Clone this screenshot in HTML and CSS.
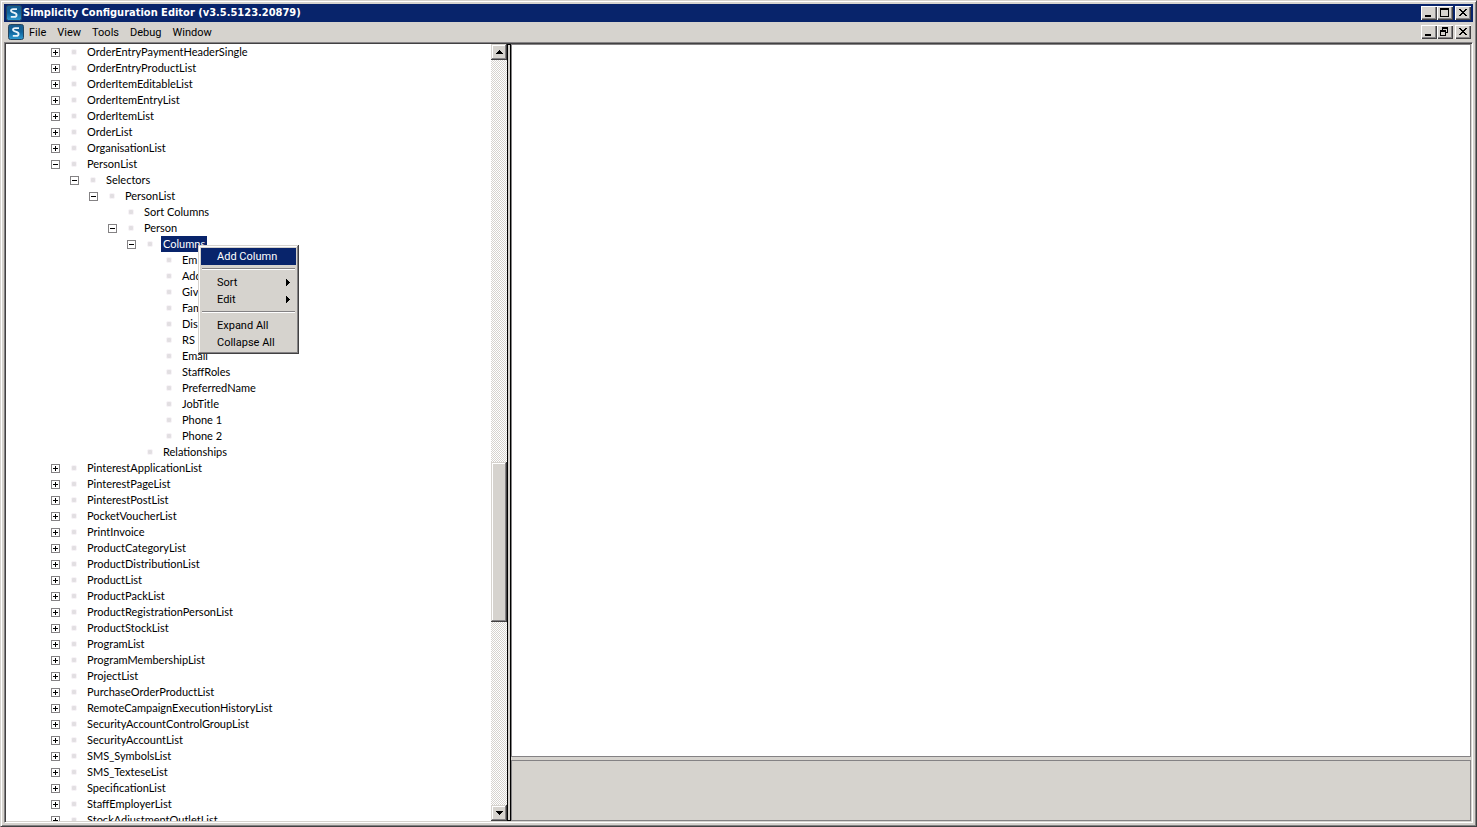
FILE: index.html
```html
<!DOCTYPE html>
<html lang="en">
<head>
    <meta charset="UTF-8">
    <meta name="viewport" content="width=device-width, initial-scale=1.0">
    <title>Simplicity Configuration Editor</title>
    <link rel="stylesheet" href="styles.css">
</head>
<body>
    <!-- shared logo -->
    <svg class="defs" width="0" height="0" aria-hidden="true">
        <defs>
            <linearGradient id="logoFill" x1="0" y1="0" x2="0" y2="1">
                <stop offset="0" stop-color="#175a8c"/>
                <stop offset="0.5" stop-color="#10649c"/>
                <stop offset="1" stop-color="#2f9bd2"/>
            </linearGradient>
            <symbol id="logo" viewBox="0 0 16 16">
                <rect x="0.5" y="0.5" width="15" height="15" rx="2" fill="url(#logoFill)" stroke="#26455e"/>
                <path d="M11 4.2H7.2C5.4 4.2 5 5 5 5.8C5 8.2 10.6 7.2 10.6 9.9C10.6 11.2 9.8 11.8 8.4 11.8H4.8" fill="none" stroke="#e8f3fa" stroke-width="1.8"/>
            </symbol>
        </defs>
    </svg>

    <div class="window">
        <header class="title-bar">
            <svg class="logo"><use href="#logo"/></svg>
            <h1>Simplicity Configuration Editor (v3.5.5123.20879)</h1>
            <div class="window-buttons">
                <button type="button" aria-label="Minimize"><svg viewBox="0 0 12 10"><path d="M2 7h6v2H2z"/></svg></button>
                <button type="button" aria-label="Maximize"><svg viewBox="0 0 12 10"><path fill-rule="evenodd" d="M1 0h9v9H1zM2 2v6h7V2z"/></svg></button>
                <button type="button" class="close" aria-label="Close"><svg viewBox="0 0 12 10"><path d="M2 1h2v1h1v1h2V2h1V1h2v1H9v1H8v1H7v1h1v1h1v1h1v1H8V7H7V6H5v1H4v1H2V7h1V6h1V5h1V4H4V3H3V2H2z"/></svg></button>
            </div>
        </header>

        <nav class="menu-bar">
            <svg class="logo"><use href="#logo"/></svg>
            <button type="button">File</button>
            <button type="button">View</button>
            <button type="button">Tools</button>
            <button type="button">Debug</button>
            <button type="button">Window</button>
            <div class="window-buttons">
                <button type="button" aria-label="Minimize child"><svg viewBox="0 0 12 10"><path d="M2 7h6v2H2z"/></svg></button>
                <button type="button" aria-label="Restore child"><svg viewBox="0 0 12 10"><path fill-rule="evenodd" d="M3 0h6v6H7v3H1V3h2zM4 2v1h3v2h1V2zM2 5v3h4V5z"/></svg></button>
                <button type="button" class="close" aria-label="Close child"><svg viewBox="0 0 12 10"><path d="M2 1h2v1h1v1h2V2h1V1h2v1H9v1H8v1H7v1h1v1h1v1h1v1H8V7H7V6H5v1H4v1H2V7h1V6h1V5h1V4H4V3H3V2H2z"/></svg></button>
            </div>
        </nav>

        <main class="workspace">
            <section class="tree-pane">
                <ul class="tree">
                    <li><div class="node"><button class="toggle plus" aria-label="Expand"></button><i class="dot"></i><span class="label">OrderEntryPaymentHeaderSingle</span></div></li>
                    <li><div class="node"><button class="toggle plus" aria-label="Expand"></button><i class="dot"></i><span class="label">OrderEntryProductList</span></div></li>
                    <li><div class="node"><button class="toggle plus" aria-label="Expand"></button><i class="dot"></i><span class="label">OrderItemEditableList</span></div></li>
                    <li><div class="node"><button class="toggle plus" aria-label="Expand"></button><i class="dot"></i><span class="label">OrderItemEntryList</span></div></li>
                    <li><div class="node"><button class="toggle plus" aria-label="Expand"></button><i class="dot"></i><span class="label">OrderItemList</span></div></li>
                    <li><div class="node"><button class="toggle plus" aria-label="Expand"></button><i class="dot"></i><span class="label">OrderList</span></div></li>
                    <li><div class="node"><button class="toggle plus" aria-label="Expand"></button><i class="dot"></i><span class="label">OrganisationList</span></div></li>
                    <li>
                        <div class="node"><button class="toggle" aria-label="Collapse"></button><i class="dot"></i><span class="label">PersonList</span></div>
                        <ul>
                            <li>
                                <div class="node"><button class="toggle" aria-label="Collapse"></button><i class="dot"></i><span class="label">Selectors</span></div>
                                <ul>
                                    <li>
                                        <div class="node"><button class="toggle" aria-label="Collapse"></button><i class="dot"></i><span class="label">PersonList</span></div>
                                        <ul>
                                            <li><div class="node leaf"><i class="dot"></i><span class="label">Sort Columns</span></div></li>
                                            <li>
                                                <div class="node"><button class="toggle" aria-label="Collapse"></button><i class="dot"></i><span class="label">Person</span></div>
                                                <ul>
                                                    <li>
                                                        <div class="node"><button class="toggle" aria-label="Collapse"></button><i class="dot"></i><span class="label selected">Columns</span></div>
                                                        <ul>
                                                            <li><div class="node leaf"><i class="dot"></i><span class="label">Em</span></div></li>
                                                            <li><div class="node leaf"><i class="dot"></i><span class="label">Add</span></div></li>
                                                            <li><div class="node leaf"><i class="dot"></i><span class="label">Giv</span></div></li>
                                                            <li><div class="node leaf"><i class="dot"></i><span class="label">Fam</span></div></li>
                                                            <li><div class="node leaf"><i class="dot"></i><span class="label">Dis</span></div></li>
                                                            <li><div class="node leaf"><i class="dot"></i><span class="label">RS</span></div></li>
                                                            <li><div class="node leaf"><i class="dot"></i><span class="label">Email</span></div></li>
                                                            <li><div class="node leaf"><i class="dot"></i><span class="label">StaffRoles</span></div></li>
                                                            <li><div class="node leaf"><i class="dot"></i><span class="label">PreferredName</span></div></li>
                                                            <li><div class="node leaf"><i class="dot"></i><span class="label">JobTitle</span></div></li>
                                                            <li><div class="node leaf"><i class="dot"></i><span class="label">Phone 1</span></div></li>
                                                            <li><div class="node leaf"><i class="dot"></i><span class="label">Phone 2</span></div></li>
                                                        </ul>
                                                    </li>
                                                    <li><div class="node leaf"><i class="dot"></i><span class="label">Relationships</span></div></li>
                                                </ul>
                                            </li>
                                        </ul>
                                    </li>
                                </ul>
                            </li>
                        </ul>
                    </li>
                    <li><div class="node"><button class="toggle plus" aria-label="Expand"></button><i class="dot"></i><span class="label">PinterestApplicationList</span></div></li>
                    <li><div class="node"><button class="toggle plus" aria-label="Expand"></button><i class="dot"></i><span class="label">PinterestPageList</span></div></li>
                    <li><div class="node"><button class="toggle plus" aria-label="Expand"></button><i class="dot"></i><span class="label">PinterestPostList</span></div></li>
                    <li><div class="node"><button class="toggle plus" aria-label="Expand"></button><i class="dot"></i><span class="label">PocketVoucherList</span></div></li>
                    <li><div class="node"><button class="toggle plus" aria-label="Expand"></button><i class="dot"></i><span class="label">PrintInvoice</span></div></li>
                    <li><div class="node"><button class="toggle plus" aria-label="Expand"></button><i class="dot"></i><span class="label">ProductCategoryList</span></div></li>
                    <li><div class="node"><button class="toggle plus" aria-label="Expand"></button><i class="dot"></i><span class="label">ProductDistributionList</span></div></li>
                    <li><div class="node"><button class="toggle plus" aria-label="Expand"></button><i class="dot"></i><span class="label">ProductList</span></div></li>
                    <li><div class="node"><button class="toggle plus" aria-label="Expand"></button><i class="dot"></i><span class="label">ProductPackList</span></div></li>
                    <li><div class="node"><button class="toggle plus" aria-label="Expand"></button><i class="dot"></i><span class="label">ProductRegistrationPersonList</span></div></li>
                    <li><div class="node"><button class="toggle plus" aria-label="Expand"></button><i class="dot"></i><span class="label">ProductStockList</span></div></li>
                    <li><div class="node"><button class="toggle plus" aria-label="Expand"></button><i class="dot"></i><span class="label">ProgramList</span></div></li>
                    <li><div class="node"><button class="toggle plus" aria-label="Expand"></button><i class="dot"></i><span class="label">ProgramMembershipList</span></div></li>
                    <li><div class="node"><button class="toggle plus" aria-label="Expand"></button><i class="dot"></i><span class="label">ProjectList</span></div></li>
                    <li><div class="node"><button class="toggle plus" aria-label="Expand"></button><i class="dot"></i><span class="label">PurchaseOrderProductList</span></div></li>
                    <li><div class="node"><button class="toggle plus" aria-label="Expand"></button><i class="dot"></i><span class="label">RemoteCampaignExecutionHistoryList</span></div></li>
                    <li><div class="node"><button class="toggle plus" aria-label="Expand"></button><i class="dot"></i><span class="label">SecurityAccountControlGroupList</span></div></li>
                    <li><div class="node"><button class="toggle plus" aria-label="Expand"></button><i class="dot"></i><span class="label">SecurityAccountList</span></div></li>
                    <li><div class="node"><button class="toggle plus" aria-label="Expand"></button><i class="dot"></i><span class="label">SMS_SymbolsList</span></div></li>
                    <li><div class="node"><button class="toggle plus" aria-label="Expand"></button><i class="dot"></i><span class="label">SMS_TexteseList</span></div></li>
                    <li><div class="node"><button class="toggle plus" aria-label="Expand"></button><i class="dot"></i><span class="label">SpecificationList</span></div></li>
                    <li><div class="node"><button class="toggle plus" aria-label="Expand"></button><i class="dot"></i><span class="label">StaffEmployerList</span></div></li>
                    <li><div class="node"><button class="toggle plus" aria-label="Expand"></button><i class="dot"></i><span class="label">StockAdjustmentOutletList</span></div></li>
                </ul>
                <div class="scrollbar">
                    <button type="button" class="arrow" aria-label="Scroll up"><svg viewBox="0 0 7 4"><path d="M3 0h1v1h1v1h1v1h1v1H0V3h1V2h1V1h1z"/></svg></button>
                    <div class="track">
                        <div class="before"></div>
                        <div class="thumb"></div>
                        <div class="after"></div>
                    </div>
                    <button type="button" class="arrow" aria-label="Scroll down"><svg viewBox="0 0 7 4"><path d="M0 0h7v1H6v1H5v1H4v1H3V3H2V2H1V1H0z"/></svg></button>
                </div>
            </section>
            <div class="splitter"></div>
            <section class="detail-pane">
                <div class="editor"></div>
                <div class="help"></div>
            </section>
        </main>
    </div>

    <div class="context-menu" role="menu">
        <button type="button" role="menuitem" class="active">Add Column</button>
        <hr>
        <button type="button" role="menuitem">Sort<svg viewBox="0 0 4 7"><path d="M0 0h1v1h1v1h1v1h1v1H3v1H2v1H1v1H0z"/></svg></button>
        <button type="button" role="menuitem">Edit<svg viewBox="0 0 4 7"><path d="M0 0h1v1h1v1h1v1h1v1H3v1H2v1H1v1H0z"/></svg></button>
        <hr>
        <button type="button" role="menuitem">Expand All</button>
        <button type="button" role="menuitem">Collapse All</button>
    </div>
</body>
</html>
```
FILE: styles.css
```css
* {
    box-sizing: border-box;
}

body {
    margin: 0;
    background: #d6d3ce;
    color: #000;
    font-family: Roboto, Tahoma, sans-serif;
    font-size: 11px;
    overflow: hidden;
}

button {
    margin: 0;
    padding: 0;
    border: none;
    background: #d6d3ce;
    color: inherit;
    font: inherit;
}

svg {
    display: block;
    shape-rendering: crispEdges;
}

.defs {
    position: absolute;
}

.window {
    display: flex;
    flex-direction: column;
    height: 100vh;
    padding: 3px;
    border: 1px solid #d6d3ce;
    border-right-color: #424142;
    border-bottom-color: #424142;
    box-shadow: inset 1px 1px #fff, inset -1px -1px #848284;
}

/* title and menu */
.title-bar {
    display: flex;
    align-items: center;
    flex: none;
    height: 18px;
    padding: 0 2px;
    background: #08246b;
    color: #fff;
}

.title-bar h1 {
    flex: 1;
    margin: 0;
    padding-left: 1px;
    font-family: Tahoma, "DejaVu Sans Condensed", sans-serif;
    font-size: 11px;
    line-height: 18px;
    white-space: nowrap;
}

.logo {
    flex: none;
    width: 16px;
    height: 16px;
    shape-rendering: auto;
}

.menu-bar {
    display: flex;
    align-items: center;
    flex: none;
    height: 20px;
    padding: 0 2px 0 4px;
}

.menu-bar > button {
    padding: 1px 6px 0 5px;
    line-height: 20px;
}

.window-buttons {
    display: flex;
    margin-left: auto;
}

.window-buttons button {
    width: 16px;
    height: 14px;
    padding: 2px;
    color: #000;
    box-shadow: inset 1px 1px #fff, inset -1px -1px #424142, inset -2px -2px #848284;
}

.window-buttons .close {
    margin-left: 2px;
}

.window-buttons svg {
    width: 12px;
    height: 10px;
}

/* workspace */
.workspace {
    display: flex;
    flex: 1;
    min-height: 0;
    border: 1px solid #848284;
    border-right-color: #fff;
    border-bottom-color: #fff;
    padding: 1px;
    box-shadow: inset 1px 1px #424142;
}

.tree-pane {
    display: flex;
    flex: 0 0 501px;
    background: #fff;
    overflow: hidden;
}

.tree {
    flex: 1;
    margin: 0;
    padding: 0 0 0 45px;
    font-family: Lato, "Liberation Sans", sans-serif;
    list-style: none;
    overflow: hidden;
}

.tree ul {
    margin: 0;
    padding: 0 0 0 19px;
    list-style: none;
}

.node {
    display: flex;
    align-items: center;
    height: 16px;
}

.node.leaf {
    padding-left: 9px;
}

.toggle {
    width: 9px;
    height: 9px;
    border: 1px solid #848284;
    background: linear-gradient(#000, #000) center / 5px 1px no-repeat #fff;
}

.toggle.plus {
    background: linear-gradient(#000, #000) center / 5px 1px no-repeat,
        linear-gradient(#000, #000) center / 1px 5px no-repeat #fff;
}

.dot {
    width: 6px;
    height: 6px;
    margin: 0 8px 0 11px;
    border: 1px solid #f7f3f7;
    border-radius: 2px;
    background: #e2dfe2;
}

.label {
    padding: 0 2px;
    line-height: 16px;
    white-space: nowrap;
}

.label.selected {
    background: #08246b;
    color: #fff;
}

.scrollbar {
    display: flex;
    flex-direction: column;
    width: 16px;
}

.arrow,
.thumb {
    background: #d6d3ce;
    box-shadow: inset -1px -1px #424142, inset 1px 1px #d6d3ce, inset -2px -2px #848284, inset 2px 2px #fff;
}

.arrow {
    flex: none;
    height: 16px;
}

.arrow svg {
    width: 7px;
    height: 4px;
    margin: 0 auto;
}

.track {
    display: flex;
    flex-direction: column;
    flex: 1;
    background: repeating-conic-gradient(#d6d3ce 0 25%, #fff 0 50%) 0 0 / 2px 2px;
}

.before {
    flex: 402;
}

.thumb {
    flex: 160;
}

.after {
    flex: 183;
}

.splitter {
    flex: 0 0 4px;
    border: 1px solid #000;
}

.detail-pane {
    display: flex;
    flex-direction: column;
    flex: 1;
    gap: 3px;
}

.editor,
.help {
    border: 1px solid #848284;
}

.editor {
    flex: 1;
    background: #fff;
}

.help {
    flex: 0 0 61px;
}

/* context menu */
.context-menu {
    position: absolute;
    top: 245px;
    left: 198px;
    width: 101px;
    padding: 3px;
    background: #d6d3ce;
    box-shadow: inset -1px -1px #424142, inset 1px 1px #d6d3ce, inset -2px -2px #848284, inset 2px 2px #fff;
}

.context-menu button {
    display: flex;
    align-items: center;
    justify-content: space-between;
    width: 100%;
    height: 17px;
    padding: 0 6px 0 16px;
    line-height: 16px;
    white-space: nowrap;
}

.context-menu .active {
    background: #08246b;
    color: #fff;
}

.context-menu svg {
    width: 4px;
    height: 7px;
}

.context-menu hr {
    height: 2px;
    margin: 3px 1px 4px;
    border: none;
    border-top: 1px solid #848284;
    background: #fff;
}
```
